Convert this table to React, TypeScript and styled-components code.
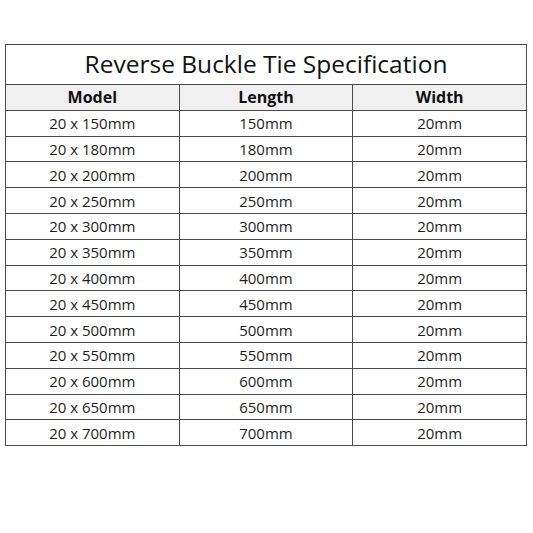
import styled, { createGlobalStyle } from "styled-components";

const GlobalStyle = createGlobalStyle`
  html, body {
    margin: 0;
    padding: 0;
    background: #ffffff;
  }
  body {
    font-family: "Open Sans", "Noto Sans", sans-serif;
    color: #1e1e1e;
  }
`;

const Page = styled.div`
  width: 533px;
  height: 533px;
  padding: 44px 6px 0 5px;
  box-sizing: border-box;
`;

const SpecTable = styled.table`
  width: 522px;
  border-collapse: collapse;
  table-layout: fixed;
  border: 1px solid #4a4a4a;
`;

const TitleCell = styled.th`
  height: 37px;
  padding: 0 0 2px;
  font-size: 24.5px;
  font-weight: 400;
  text-align: center;
  border: 1px solid #4a4a4a;
  color: #111;
`;

const HeadCell = styled.th`
  height: 24.8px;
  padding: 0;
  background: #f0f0f0;
  font-size: 16px;
  font-weight: 700;
  text-align: center;
  border: 1px solid #4a4a4a;
  color: #111;
`;

const Cell = styled.td`
  height: 24.8px;
  padding: 0;
  font-size: 15px;
  text-align: center;
  border: 1px solid #4a4a4a;
`;

const lengths = [150, 180, 200, 250, 300, 350, 400, 450, 500, 550, 600, 650, 700];

function App(): JSX.Element {
  return (
    <Page>
      <GlobalStyle />
      <SpecTable>
        <thead>
          <tr>
            <TitleCell colSpan={3}>Reverse Buckle Tie Specification</TitleCell>
          </tr>
          <tr>
            <HeadCell>Model</HeadCell>
            <HeadCell>Length</HeadCell>
            <HeadCell>Width</HeadCell>
          </tr>
        </thead>
        <tbody>
          {lengths.map((len) => (
            <tr key={len}>
              <Cell>20 x {len}mm</Cell>
              <Cell>{len}mm</Cell>
              <Cell>20mm</Cell>
            </tr>
          ))}
        </tbody>
      </SpecTable>
    </Page>
  );
}

export default App;
